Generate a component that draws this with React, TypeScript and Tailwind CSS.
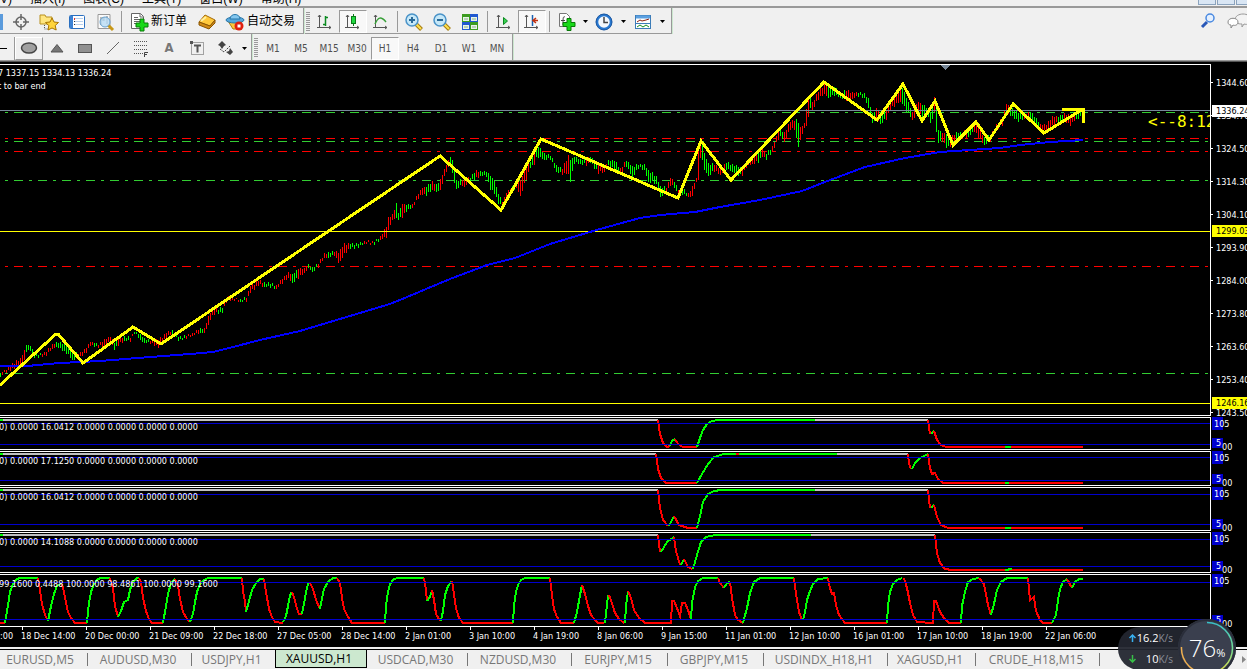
import React from "react";

type Bar = [number, number, number, string];

const keyBars: Bar[] = [
  [0, 373, 377, "g"], [2, 372, 375, "r"], [10, 366, 371, "r"], [20, 358, 367, "r"], [24, 350, 360, "r"], [26, 345, 352, "g"],
  [30, 346, 351, "g"], [34, 353, 358, "g"], [42, 354, 357, "r"], [46, 352, 356, "r"], [52, 344, 349, "r"], [56, 342, 347, "g"],
  [66, 344, 354, "g"], [72, 351, 360, "g"], [78, 354, 359, "r"], [86, 348, 353, "r"], [90, 342, 346, "r"], [94, 343, 347, "g"],
  [98, 345, 348, "r"], [104, 339, 346, "r"], [110, 337, 343, "r"], [114, 343, 350, "g"], [118, 339, 346, "r"], [124, 336, 341, "g"],
  [130, 338, 342, "r"], [134, 332, 334, "g"], [140, 334, 340, "g"], [144, 338, 343, "g"], [150, 341, 344, "r"], [158, 340, 348, "r"],
  [166, 333, 338, "r"], [172, 330, 334, "g"], [178, 337, 341, "g"], [186, 336, 339, "r"], [192, 333, 336, "r"], [200, 328, 333, "g"],
  [204, 328, 333, "r"], [208, 316, 325, "r"], [212, 307, 315, "r"], [218, 310, 314, "g"], [223, 306, 313, "r"], [225, 297, 303, "r"],
  [232, 298, 300, "r"], [240, 299, 302, "g"], [246, 298, 302, "r"], [250, 286, 293, "r"], [258, 281, 286, "r"], [264, 282, 287, "g"],
  [270, 284, 288, "g"], [276, 285, 289, "r"], [282, 279, 284, "r"], [288, 272, 278, "r"], [292, 274, 283, "g"], [298, 269, 279, "r"],
  [304, 268, 273, "r"], [308, 264, 268, "g"], [312, 267, 272, "g"], [318, 264, 268, "r"], [324, 253, 258, "r"], [328, 252, 258, "g"],
  [334, 252, 256, "r"], [339, 252, 265, "r"], [343, 244, 256, "r"], [350, 244, 249, "g"], [358, 244, 248, "g"], [364, 241, 244, "r"],
  [374, 242, 245, "g"], [380, 236, 240, "r"], [386, 227, 238, "r"], [388, 217, 230, "r"], [392, 214, 220, "r"], [396, 203, 218, "g"],
  [398, 213, 220, "g"], [402, 204, 218, "r"], [406, 205, 212, "g"], [412, 204, 208, "r"], [418, 194, 199, "r"], [422, 188, 195, "r"],
  [426, 187, 196, "g"], [432, 181, 190, "r"], [436, 184, 192, "g"], [440, 179, 190, "r"], [446, 165, 172, "r"], [450, 157, 166, "g"],
  [453, 163, 180, "g"], [456, 180, 189, "g"], [462, 180, 186, "r"], [464, 179, 187, "r"], [470, 178, 182, "g"], [475, 171, 180, "r"],
  [480, 171, 176, "g"], [486, 172, 177, "g"], [490, 176, 190, "g"], [494, 181, 194, "g"], [498, 194, 204, "g"], [502, 202, 207, "r"],
  [506, 193, 199, "r"], [512, 186, 192, "g"], [516, 181, 188, "r"], [520, 180, 196, "r"], [526, 166, 180, "r"], [530, 162, 168, "g"],
  [534, 152, 165, "r"], [536, 144, 157, "g"], [544, 153, 160, "g"], [550, 156, 160, "g"], [556, 165, 172, "g"], [562, 169, 175, "r"],
  [568, 155, 174, "r"], [570, 160, 182, "g"], [574, 157, 164, "g"], [580, 159, 164, "g"], [586, 158, 166, "r"], [590, 157, 163, "g"],
  [598, 165, 174, "r"], [604, 165, 172, "r"], [608, 160, 165, "g"], [614, 161, 171, "g"], [620, 168, 174, "r"], [626, 161, 167, "g"],
  [632, 166, 178, "g"], [638, 165, 169, "g"], [644, 164, 170, "g"], [648, 170, 182, "g"], [656, 176, 184, "g"], [660, 186, 197, "g"],
  [666, 188, 194, "r"], [670, 178, 186, "r"], [674, 182, 188, "g"], [678, 190, 197, "r"], [682, 189, 195, "g"], [688, 193, 197, "r"],
  [692, 186, 196, "r"], [696, 178, 182, "r"], [698, 150, 180, "r"], [700, 142, 158, "r"], [702, 144, 160, "g"], [704, 153, 170, "g"],
  [708, 163, 176, "g"], [714, 165, 172, "r"], [720, 168, 175, "r"], [726, 163, 170, "g"], [732, 164, 172, "g"], [738, 167, 176, "g"],
  [742, 169, 176, "r"], [746, 162, 168, "r"], [752, 155, 164, "r"], [758, 152, 163, "g"], [762, 149, 157, "r"], [766, 154, 160, "g"],
  [772, 146, 152, "r"], [778, 132, 140, "r"], [780, 130, 136, "g"], [784, 132, 142, "r"], [790, 122, 130, "r"], [795, 120, 130, "g"],
  [797, 120, 150, "g"], [800, 127, 140, "r"], [804, 123, 128, "r"], [807, 100, 125, "r"], [810, 98, 108, "g"], [812, 102, 110, "r"],
  [818, 92, 100, "r"], [824, 84, 94, "r"], [828, 86, 98, "g"], [834, 87, 96, "g"], [840, 92, 98, "g"], [846, 91, 101, "r"],
  [852, 92, 99, "r"], [858, 93, 97, "g"], [864, 93, 98, "g"], [868, 98, 108, "g"], [872, 113, 123, "g"], [876, 108, 118, "r"],
  [880, 112, 124, "g"], [886, 110, 120, "r"], [890, 100, 110, "r"], [898, 93, 103, "r"], [902, 88, 104, "g"], [906, 98, 112, "g"],
  [912, 112, 120, "r"], [918, 102, 113, "r"], [922, 105, 118, "g"], [928, 108, 117, "g"], [931, 112, 126, "g"], [934, 97, 112, "r"],
  [936, 108, 132, "g"], [938, 130, 143, "g"], [942, 133, 142, "r"], [946, 134, 148, "g"], [950, 138, 147, "r"], [956, 132, 139, "g"],
  [962, 133, 139, "r"], [968, 128, 137, "g"], [974, 122, 132, "r"], [978, 127, 138, "r"], [984, 137, 145, "g"], [990, 136, 142, "r"],
  [996, 124, 130, "r"], [1002, 118, 126, "r"], [1006, 104, 115, "r"], [1010, 107, 116, "g"], [1018, 113, 122, "g"], [1024, 114, 119, "r"],
  [1030, 112, 120, "g"], [1036, 118, 126, "g"], [1040, 124, 131, "r"], [1046, 125, 132, "r"], [1052, 116, 125, "r"], [1058, 117, 124, "g"],
  [1064, 113, 122, "r"], [1070, 116, 126, "r"], [1076, 112, 119, "g"], [1084, 107, 117, "r"],
];

const bars: Bar[] = [];
for (let i = 0; i < keyBars.length - 1; i++) {
  const [x0, h0, l0, c] = keyBars[i];
  const [x1, h1, l1] = keyBars[i + 1];
  for (let x = x0 + (x0 % 2); x < x1; x += 2) {
    const t = (x - x0) / (x1 - x0);
    const up = x === x0 ? 0 : ((x * 7) % 4) - 1;
    const down = x === x0 ? 0 : ((x * 11) % 4) - 2;
    bars.push([x, Math.round(h0 + (h1 - h0) * t) + up, Math.round(l0 + (l1 - l0) * t) + down, c]);
  }
}

type Line = [string, string];
const R = "#ff0000";
const G = "#00ff00";
const S = "#c0c0c0";

interface Pane {
  top: number;
  box: string;
  levels: [number, number];
  text: string;
  lines: Line[];
}

const panes: Pane[] = [
  {
    top: 417, box: "h-[33px]", levels: [423, 444], text: "0) 0.0000 16.0412 0.0000 0.0000 0.0000 0.0000",
    lines: [
      [S, "3,420 658,420"], [G, "0,420 3,420"], [R, "658,420 660,434 663,443 667,447 670,446"], [G, "670,446 672,441 675,439"],
      [R, "675,439 678,444 683,447 697,447"], [G, "697,447 700,438 703,430 707,424 712,421 718,420 815,420"], [S, "815,420 928,420"],
      [R, "928,420 930,434"], [G, "931,434 934,431"], [R, "934,431 937,440 941,445 946,447 1083,447"], [G, "1005,447 1011,447"],
    ],
  },
  {
    top: 451, box: "h-[35px]", levels: [457, 480], text: "0) 0.0000 17.1250 0.0000 0.0000 0.0000 0.0000",
    lines: [
      [S, "3,454 656,454"], [G, "0,454 3,454"], [R, "656,454 658,469 661,478 666,483 697,483"],
      [G, "697,483 702,474 708,464 714,457 724,454 837,454"], [R, "736,454 739,454"], [S, "837,454 908,454"],
      [R, "908,454 909,464 911,469"], [G, "912,469 915,463 920,458 928,454"], [R, "928,454 930,468 932,474 935,473 938,479 943,483 1083,483"],
      [G, "1005,483 1009,483"],
    ],
  },
  {
    top: 487, box: "h-[44px]", levels: [494, 524], text: "0) 0.0000 16.0412 0.0000 0.0000 0.0000 0.0000",
    lines: [
      [S, "3,490 658,490"], [G, "0,490 3,490"], [R, "658,490 660,508 663,520 668,526"], [G, "669,526 674,516"],
      [R, "674,516 679,525 688,528 697,528"], [G, "697,528 700,516 703,502 708,494 714,491 721,490 815,490"], [S, "815,490 928,490"],
      [R, "928,490 930,508"], [G, "931,508 934,505"], [R, "934,505 937,517 941,525 948,528 1083,528"], [G, "1005,528 1011,528"],
    ],
  },
  {
    top: 532, box: "h-[41px]", levels: [539, 566], text: "0) 0.0000 14.1088 0.0000 0.0000 0.0000 0.0000",
    lines: [
      [S, "3,535 658,535"], [G, "0,535 3,535"], [R, "658,535 660,552"], [G, "661,552 667,542 674,537"], [R, "674,537 676,551 680,565"],
      [G, "681,565 684,559"], [R, "684,559 688,567 692,569"], [G, "693,569 697,555 701,542 706,537 715,535 811,535"], [S, "811,535 935,535"],
      [R, "935,535 937,553 940,563 945,569 952,570 1083,570"], [G, "1005,570 1012,569"],
    ],
  },
  {
    top: 574, box: "h-[53px]", levels: [582, 619], text: "99.1600 0.4488 100.0000 98.4861 100.0000 99.1600",
    lines: [
      [R, "0,623 5,623"], [G, "5,623 8,605 10,592 13,584 17,579 20,578 38,578"], [R, "38,578 40,590 42,604 45,615 48,621"],
      [G, "48,621 51,606 54,594 57,586 61,584"], [R, "62,584 64,592 66,603 68,612 71,618 75,623 87,623"],
      [G, "87,623 88,612 89,603 91,592 94,584 98,579 101,578 110,578"], [R, "110,578 113,588 115,606 118,617"],
      [G, "118,617 121,611 124,602 128,600 130,590 133,582 137,578 139,578"], [R, "139,578 141,582 143,598 146,611 149,619 152,623 163,623"],
      [G, "163,623 166,606 168,594 171,583 175,579"], [R, "175,579 178,585 180,599 183,612 187,619 190,622"],
      [G, "190,622 193,614 195,602 197,592 200,584 204,580 208,578 242,578"], [R, "242,578 243,592 245,601 246,612"],
      [G, "246,612 249,601 252,590 256,583 260,579 264,579"], [R, "264,579 266,592 269,609 272,617 275,622 283,623"],
      [G, "283,622 286,616 288,606 290,595 292,592"], [R, "292,592 294,597 297,609 299,614 302,614"],
      [G, "302,614 304,604 306,592 308,584 310,583"], [R, "310,583 313,589 316,600 320,609"],
      [G, "320,609 322,598 324,589 328,582 333,578 337,578"], [R, "337,578 340,583 342,598 344,609 347,615 352,623 385,623"],
      [G, "385,623 386,605 388,592 390,584 394,579 398,578 424,578"], [R, "424,578 426,590 427,601"], [G, "427,601 430,597 432,590"],
      [R, "432,590 434,600 436,614 440,621"], [G, "441,621 443,611 445,595 448,586 452,581"],
      [R, "452,581 454,594 456,608 459,618 463,623 513,623"], [G, "513,623 514,605 516,592 518,585 521,580 525,578 550,578"],
      [R, "550,578 552,595 554,609 557,617 561,623 574,623"], [G, "574,623 577,612 580,595 582,585"],
      [R, "582,585 585,594 588,606 591,615 595,620 598,623 604,623"], [G, "605,623 607,605 608,595"],
      [R, "609,595 612,603 615,613 619,619 624,623"], [G, "625,623 626,606 628,591"],
      [R, "628,591 631,598 634,610 639,618 645,623 671,623 672,601 674,601 677,608 680,616 682,603 685,603 688,610 691,619"],
      [G, "691,619 692,603 695,587 698,581 703,578 718,578"], [R, "718,578 720,583 724,588"], [G, "724,588 727,583 730,582"],
      [R, "730,582 732,598 735,615 738,620 743,623"], [G, "743,623 747,608 750,593 754,582 760,578 794,578"],
      [R, "794,578 796,594 799,612 802,620"], [G, "803,620 805,612 807,600 810,591 813,584 818,579 828,578"],
      [R, "828,578 830,588 832,594 834,593 836,605 839,615 845,623 887,623"], [G, "887,623 888,605 890,592 893,584 897,580 902,578"],
      [R, "904,578 907,588 910,603 913,615 917,622 933,623 934,601 936,601 940,612 944,618 949,623 961,623"],
      [G, "961,623 962,606 965,592 968,582 973,579 979,578"], [R, "979,578 984,584 988,605 991,615"],
      [G, "991,615 994,604 997,590 1001,582 1007,578 1028,578"], [R, "1028,578 1030,600 1034,597 1036,611 1040,620 1043,623 1052,623"],
      [G, "1052,623 1056,615 1058,600 1060,589 1063,582 1067,579"], [R, "1067,579 1072,588"], [G, "1072,588 1075,582 1079,579 1083,579"],
    ],
  },
];

const dashed: [number, string][] = [
  [112, "#32cd32"], [138, R], [141, "#32cd32"], [151, R], [180, "#32cd32"], [266, R], [373, "#32cd32"],
];

const prices = ["1344.60", "1334.70", "1324.50", "1314.30", "1304.10", "1293.90", "1284.00", "1273.80", "1263.60", "1253.40", "1243.50"];

const times = [
  "18 Dec 14:00", "20 Dec 00:00", "21 Dec 09:00", "22 Dec 18:00", "27 Dec 05:00", "28 Dec 14:00", "2 Jan 01:00", "3 Jan 10:00",
  "4 Jan 19:00", "8 Jan 06:00", "9 Jan 15:00", "11 Jan 01:00", "12 Jan 10:00", "16 Jan 01:00", "17 Jan 10:00", "18 Jan 19:00", "22 Jan 06:00",
];

const tabs: [string, string][] = [
  ["EURUSD,M5", "w-[88px] pr-2"], ["AUDUSD,M30", "w-[104px] pr-1"], ["USDJPY,H1", "w-[83px] pr-1"], ["XAUUSD,H1", "w-[92px] pr-1"],
  ["USDCAD,M30", "w-[101px] pr-1"], ["NZDUSD,M30", "w-[104px] pr-1"], ["EURJPY,M15", "w-[96px] pr-1"], ["GBPJPY,M15", "w-[96px] pr-1"],
  ["USDINDX_H18,H1", "w-[124px] pr-1"], ["XAGUSD,H1", "w-[88px] pr-1"], ["CRUDE_H18,M15", "w-[124px] pr-1"],
];

const Icon = ({ children }: { children: React.ReactNode }) => (
  <svg width="20" height="20" viewBox="0 0 20 20" fill="none" aria-hidden="true" className="shrink-0">{children}</svg>
);

const Axes = () => <path d="M4.5 3v13M2 15.5h14M3 5l1.5-2L6 5M14 14l2 1.5-2 1.5" stroke="#555" />;
const Plus = () => <path d="M13 9h4v4h4v4h-4v4h-4v-4H9v-4h4z" transform="translate(0 -1.5)" fill="#18d818" stroke="#087a08" />;
const Lens = ({ plus }: { plus?: boolean }) => (
  <Icon>
    <path d="M12 12l5.500 5.500" stroke="#a67c10" strokeWidth="4" />
    <path d="M12 12l5 5" stroke="#ffe14d" strokeWidth="2" />
    <circle cx="8" cy="8" r="6" fill="#c6e8f8" stroke="#4a93c8" strokeWidth="1.500" />
    <path d={plus ? "M5 8h6M8 5v6" : "M5 8h6"} stroke="#2a6a98" strokeWidth="2" />
  </Icon>
);

type Look = "flat" | "pressed" | "raised";
const looks: Record<Look, string> = {
  flat: "border-transparent",
  pressed: "border-r-white border-b-white border-l-[#999] border-t-[#999] bg-[#f8f8f8]",
  raised: "border-l-white border-t-white border-r-[#999] border-b-[#999]",
};

const ToolButton = ({ label, look = "flat", children }: { label: string; look?: Look; children: React.ReactNode }) => (
  <button
    type="button"
    aria-label={label}
    aria-pressed={look !== "flat"}
    className={"flex h-[23px] w-7 shrink-0 items-center justify-center border " + looks[look]}
  >
    {children}
  </button>
);

const Sep = () => <div className="mx-[2px] h-[21px] w-px shrink-0 bg-[#999]" />;
const Grip = () => (
  <div className="mx-px h-[20px] w-[4px] shrink-0 bg-[repeating-linear-gradient(to_bottom,#999_0_1px,#f0f0f0_1px_2px)]" />
);
const GroupEnd = () => <div className="-mt-[2px] h-[26px] w-[2px] shrink-0 border-l border-[#999] bg-[#cce8cf]" />;
const Caret = ({ label }: { label: string }) => (
  <button type="button" aria-label={label} className="flex h-[23px] w-[10px] items-center justify-center">
    <svg width="5" height="3" aria-hidden="true"><path d="M0 0h5L2.500 3z" fill="#000" /></svg>
  </button>
);

function MenuStrip() {
  return (
    <div className="flex h-2 items-end justify-between overflow-hidden border-b-2 border-b-[#999] bg-[#f0f0f0]">
      <nav className="-ml-7 flex gap-[18px] text-[12px] leading-[13px] text-black">
        {["显示(V)", "插入(I)", "图表(C)", "工具(T)", "窗口(W)", "帮助(H)"].map((m) => (
          <a key={m} href="#menu" className="whitespace-nowrap">{m}</a>
        ))}
      </nav>
      <div className="flex h-full gap-px pb-px">
        <button type="button" aria-label="最小化" className="w-[18px] border border-t-0 border-[#8ba3bd] bg-[#d9e6f4]" />
        <button type="button" aria-label="还原" className="w-[18px] border border-t-0 border-[#8ba3bd] bg-[#d9e6f4]" />
        <button type="button" aria-label="关闭" className="w-[11px] border border-t-0 border-r-0 border-[#8ba3bd] bg-[#d9e6f4]" />
      </div>
    </div>
  );
}

function MainToolbar() {
  return (
    <div className="flex h-[26px] items-center bg-[#f0f0f0]">
      <div className="flex h-full items-center border-b border-[#999] pt-[2px]">
        <div className="mr-1 h-4 w-[3px] bg-[#5b9bdc]" />
        <ToolButton label="数据窗口">
          <Icon>
            <circle cx="10" cy="10" r="5" stroke="#666" strokeWidth="1.500" />
            <path d="M10 2v6M10 12v6M2 10h6M12 10h6" stroke="#666" strokeWidth="1.500" />
          </Icon>
        </ToolButton>
        <ToolButton label="导航">
          <Icon>
            <path d="M1 3h5l1 2h6v7H1z" fill="#ffe680" stroke="#b89020" />
            <path d="M5.500 13v4h4" stroke="#555" strokeDasharray="1 1" />
            <path d="M13 6l2 4 4.500.500-3.300 3 1 4.500L13 16l-4 2 .800-4.500-3.300-3L11 10z" fill="#ffd43b" stroke="#a87400" />
          </Icon>
        </ToolButton>
        <ToolButton label="终端">
          <Icon>
            <rect x="2.500" y="3.500" width="15" height="13" rx="1" fill="#fff" stroke="#2a6fc0" />
            <path d="M4.500 4v12" stroke="#3c82d4" strokeWidth="3" />
            <path d="M8 6.500h8M8 9.500h8M8 12.500h8" stroke="#b8cfec" />
            <path d="M7.500 6v2" stroke="#e03030" />
            <path d="M7.500 9v6" stroke="#333" strokeDasharray="1 2" />
          </Icon>
        </ToolButton>
        <ToolButton label="策略测试">
          <Icon>
            <path d="M3 2.500h12v14H3z" fill="#fafafa" stroke="#999" />
            <path d="M5 6h3v3M6 13V7M12 4v8M9 5v4" stroke="#777" />
            <path d="M13 13l5 5" stroke="#c89818" strokeWidth="3" />
            <circle cx="10" cy="10" r="5" fill="#b8dcf5" fillOpacity=".8" stroke="#6aa3d0" />
          </Icon>
        </ToolButton>
        <Sep />
        <button type="button" className="ml-[5px] flex h-[23px] items-center text-[12px] whitespace-nowrap text-black">
          <Icon>
            <path d="M2.500 1.500h9l3 3v12h-12z" fill="#fff" stroke="#666" />
            <path d="M11 2v3h3M5 5.500h4M5 7.500h6M5 9.500h6M5 11.500h4" stroke="#666" />
            <path d="M10 7h4v4h4v4h-4v4h-4v-4H6v-4h4z" transform="translate(1 0)" fill="#18d818" stroke="#087a08" />
          </Icon>
          <span className="ml-[2px] pb-[2px]">新订单</span>
        </button>
        <span className="w-[6px]" />
        <ToolButton label="MetaEditor">
          <Icon>
            <path d="M2 10l6-7 10 5-5 6z" fill="#ffc93c" stroke="#a56a08" />
            <path d="M2 10v3l10 4 6-6V8l-5 6z" fill="#d18a14" stroke="#8a5604" />
            <path d="M4 9l5-4" stroke="#fff0a0" strokeWidth="2" />
          </Icon>
        </ToolButton>
        <button type="button" className="ml-[4px] flex h-[23px] items-center text-[12px] whitespace-nowrap text-black">
          <Icon>
            <path d="M3 9h14l-3 8H8z" fill="#ffc83a" stroke="#b07e10" />
            <ellipse cx="10" cy="8" rx="9" ry="3" fill="#56a8dc" stroke="#2876a8" />
            <path d="M5 7c0-6 10-6 10 0z" fill="#82c6ee" stroke="#2876a8" />
            <circle cx="14" cy="14" r="4.500" fill="#e02010" />
            <rect x="12.500" y="12.500" width="3" height="3" fill="#fff" />
          </Icon>
          <span className="ml-[2px] pb-[2px]">自动交易</span>
        </button>
        <span className="w-[8px]" />
        <GroupEnd />
        <Grip />
        <ToolButton label="柱状图">
          <Icon><Axes /><path d="M10.500 4v10M10 5.500h3M8 12.500h3" stroke="#0a8a20" strokeWidth="1.500" /></Icon>
        </ToolButton>
        <ToolButton label="阴阳烛" look="pressed">
          <Icon><Axes /><path d="M10.500 2v12" stroke="#0a7a18" /><rect x="8.500" y="4.500" width="4" height="7" fill="#20d840" stroke="#0a7a18" /></Icon>
        </ToolButton>
        <ToolButton label="折线图">
          <Icon><Axes /><path d="M4 12c3-7 6-8 11-2" stroke="#38a038" strokeWidth="1.500" /></Icon>
        </ToolButton>
        <Sep />
        <ToolButton label="放大"><Lens plus /></ToolButton>
        <ToolButton label="缩小"><Lens /></ToolButton>
        <ToolButton label="平铺窗口">
          <Icon>
            <path d="M2 2h8v8H2zM10 10h8v8h-8z" fill="#3c9c20" />
            <path d="M10 2h8v8h-8zM2 10h8v8H2z" fill="#2058d0" />
            <path d="M3 5h6v4H3zM11 5h6v4h-6zM3 13h6v4H3zM11 13h6v4h-6z" fill="#e8f4e8" />
            <path d="M4 7h4M12 7h4M4 15h4M12 15h4" stroke="#8ab088" />
          </Icon>
        </ToolButton>
        <span className="w-px" />
        <Sep />
        <ToolButton label="自动滚动">
          <Icon><Axes /><path d="M9.500 5.500v7l4-3.500z" fill="#38d050" stroke="#0a8a20" /></Icon>
        </ToolButton>
        <ToolButton label="图表平移" look="pressed">
          <Icon><Axes /><path d="M10.500 3v11" stroke="#1860b0" strokeWidth="1.500" /><path d="M16 8.500h-5M14 6l-3 2.500 3 2.500" stroke="#c03010" strokeWidth="1.500" /></Icon>
        </ToolButton>
        <span className="w-px" />
        <Sep />
        <ToolButton label="指标">
          <Icon>
            <path d="M3.500 1.500h7l3 3v10h-10z" fill="#fff" stroke="#777" />
            <path d="M9 5c-2-1-2 1-2 8M5 8.500h4" stroke="#444" />
            <g transform="translate(-2 -1)"><Plus /></g>
          </Icon>
        </ToolButton>
        <Caret label="指标列表" />
        <ToolButton label="时间周期">
          <Icon>
            <circle cx="10" cy="10" r="7" fill="#f4f8fc" stroke="#2878d0" strokeWidth="2.500" />
            <circle cx="10" cy="10" r="8" stroke="#174e94" strokeWidth=".8" />
            <path d="M10 5v5.500h4" stroke="#444" strokeWidth="1.500" />
          </Icon>
        </ToolButton>
        <Caret label="周期列表" />
        <span className="w-px" />
        <ToolButton label="模板">
          <Icon>
            <rect x="2.500" y="3.500" width="15" height="13" fill="#fff" stroke="#3c7cb8" />
            <path d="M3 5h14" stroke="#5ba0e0" strokeWidth="3" />
            <path d="M4 10l3-2 2 1 4-1 3-1" stroke="#8a2010" />
            <path d="M3 11.500h14" stroke="#3c7cb8" />
            <path d="M4 15l3-2 3 2 3-2 3 2" stroke="#189020" />
          </Icon>
        </ToolButton>
        <Caret label="模板列表" />
        <span className="w-[4px]" />
        <GroupEnd />
      </div>
      <div className="ml-auto flex items-center gap-2">
        <button type="button" aria-label="搜索">
          <Icon>
            <path d="M8 11l-5 5" stroke="#2858b8" strokeWidth="3" />
            <circle cx="11" cy="7" r="4" fill="#e4f0ff" stroke="#4888e0" strokeWidth="1.500" />
          </Icon>
        </button>
        <button type="button" aria-label="聊天" className="w-5 overflow-hidden">
          <Icon>
            <path d="M8 9c0-8 16-8 16 0 0 4-4 5-7 4l-2 3v-3c-4 0-7-1-7-4z" fill="#f4f4f4" stroke="#999" />
            <path d="M1 11c0-5 10-5 10 0 0 3-3 4-5 3l-2 3v-3c-2 0-3-1-3-3z" fill="#fff" stroke="#888" />
          </Icon>
        </button>
      </div>
    </div>
  );
}

function DrawToolbar() {
  return (
    <div className="flex h-[26px] items-center bg-[#f0f0f0] pt-[2px] font-['DejaVu_Sans_Condensed','DejaVu_Sans',sans-serif] text-[10px] text-[#505050]">
      <button type="button" aria-label="水平线" className="flex h-[23px] w-[15px] items-center border-r border-[#999]">
        <span className="h-px w-[7px] bg-black" />
      </button>
      <ToolButton label="椭圆" look="raised">
        <Icon><ellipse cx="10" cy="10" rx="7.500" ry="5" fill="#a0a0a0" stroke="#444" strokeWidth="1.500" /></Icon>
      </ToolButton>
      <ToolButton label="三角形"><Icon><path d="M4 14l6-7.500 6 7.500z" fill="#777" stroke="#555" /></Icon></ToolButton>
      <ToolButton label="矩形"><Icon><rect x="3.500" y="6.500" width="13" height="8" fill="#909090" stroke="#555" /></Icon></ToolButton>
      <ToolButton label="趋势线"><Icon><path d="M4 16L16 4" stroke="#666" /></Icon></ToolButton>
      <ToolButton label="斐波那契">
        <Icon>
          <path d="M3 3.500h14M3 7.500h14M3 11.500h14M3 15.500h9" stroke="#555" strokeDasharray="1 1" />
          <path d="M17 14.500h-3.500V19M13.500 16.500H16" stroke="#444" />
        </Icon>
      </ToolButton>
      <ToolButton label="文字"><span className="text-[13px] font-bold text-[#777]">A</span></ToolButton>
      <ToolButton label="文字标签">
        <Icon>
          <rect x="4.500" y="4.500" width="12" height="12" stroke="#555" strokeDasharray="1 1" />
          <path d="M7 7.500h7M10.500 7v7.500" stroke="#555" strokeWidth="2" />
          <path d="M3 3h3v3H3z" fill="#555" />
        </Icon>
      </ToolButton>
      <ToolButton label="箭头">
        <Icon>
          <path d="M7 3l4 4-2 1-2 3-2-3-2-1zM15 10l3 4-3 3-4-3 3-1z" fill="#444" />
          <path d="M5 11l4 3 6-6" stroke="#444" strokeDasharray="2 1" />
        </Icon>
      </ToolButton>
      <Caret label="箭头列表" />
      <span className="w-[2px]" />
      <GroupEnd />
      <Grip />
      {["M1", "M5", "M15", "M30", "H1", "H4", "D1", "W1", "MN"].map((p) => (
        <ToolButton key={p} label={p} look={p === "H1" ? "pressed" : "flat"}>{p}</ToolButton>
      ))}
      <span className="w-px" />
      <GroupEnd />
    </div>
  );
}

function PriceTag({ children, place }: { children: string; place: string }) {
  return <div className={"absolute right-0 left-px h-[12px] pl-[4px] leading-[13px] text-black " + place}>{children}</div>;
}

function PriceChart() {
  return (
    <section className="flex h-[352px]">
      <div className="relative min-w-0 flex-1 overflow-hidden border-y border-r border-white">
        <svg className="block h-full w-full" shapeRendering="crispEdges" role="img" aria-label="XAUUSD H1">
          <g transform="translate(0 -65)" fill="none">
            {dashed.map(([y, c]) => (
              <line key={y} x1="-10" x2="100%" y1={y + 0.5} y2={y + 0.5} stroke={c} strokeDasharray="9 6 3 6" />
            ))}
            {bars.map(([x, h, l, c]) => (
              <line key={x} x1={x + 0.5} x2={x + 0.5} y1={h} y2={l} stroke={c === "r" ? R : G} />
            ))}
            <line x1="0" x2="100%" y1="110.5" y2="110.5" stroke="#778899" />
            <line x1="0" x2="100%" y1="231.5" y2="231.5" stroke="#ffff00" />
            <line x1="0" x2="100%" y1="403.5" y2="403.5" stroke="#ffff00" />
            <polyline
              points="0,366 27,366 60,363 100,361 150,357 190,354 213,352 233,347 260,340 300,331 350,316 390,304 407,297 450,279 487,265 515,258 550,244 600,229 640,218 660,215 695,212 720,207 760,200 802,191 830,180 865,167 905,158 940,152 1000,148 1020,145 1050,142 1083,140"
              stroke="#0000ff" strokeWidth="2"
            />
            <polyline
              points="0,385 56,334 58,334 83,363 133,327 161,344 440,156 501,210 541,139 678,198 701,141 731,180 824,82 877,120 903,84 922,121 935,101 953,145 976,122 989,140 1013,104 1044,133 1083,109"
              stroke="#ffff00" strokeWidth="3"
            />
            <path d="M1062 109.500h21.500V123" stroke="#ffff00" strokeWidth="3" />
            <path d="M940 65h11l-5.500 5z" fill="#778899" />
          </g>
        </svg>
        <div className="absolute top-[2px] -left-[2px] leading-[13px] whitespace-nowrap">
          <p>7 1337.15 1334.13 1336.24</p>
          <p>t to bar end</p>
        </div>
        <p className="absolute top-[47px] right-0 w-[62px] overflow-hidden font-['DejaVu_Sans_Mono',monospace] text-[16px] leading-5 whitespace-nowrap text-[#ff0]">
          &lt;--8:12
        </p>
      </div>
      <div className="relative w-9 shrink-0 pt-[13px] whitespace-nowrap">
        {prices.map((p) => (
          <div key={p} className="flex h-[33px] leading-[12px]">
            <span className="mt-[5px] h-px w-[2px] shrink-0 bg-white" />
            <span className="ml-[3px]">{p}</span>
          </div>
        ))}
        <PriceTag place="top-[41px] bg-white">1336.24</PriceTag>
        <PriceTag place="top-[161px] bg-[#ff0]">1299.03</PriceTag>
        <PriceTag place="top-[333px] bg-[#ff0]">1246.16</PriceTag>
      </div>
    </section>
  );
}

function IndicatorPane({ pane }: { pane: Pane }) {
  return (
    <section className={"mt-px flex " + pane.box}>
      <div className="relative min-w-0 flex-1 overflow-hidden border-y border-r border-white">
        <svg className="block h-full w-full" shapeRendering="crispEdges" aria-hidden="true">
          <g transform={`translate(0 ${-(pane.top + 1)})`} fill="none">
            {pane.lines.map(([c, pts], i) => (
              <polyline key={i} points={pts} stroke={c} strokeWidth="2" />
            ))}
            {pane.levels.map((y) => (
              <line key={y} x1="0" x2="100%" y1={y + 0.5} y2={y + 0.5} stroke="#0000cd" />
            ))}
          </g>
        </svg>
        <p className="absolute top-[3px] -left-px leading-[13px] whitespace-nowrap">{pane.text}</p>
      </div>
      <div className="flex w-9 shrink-0 flex-col justify-between overflow-hidden pl-px">
        <div className="h-[13px] w-[11px] bg-[#0000cd] pl-[2px] leading-[15px]">105</div>
        <div className="flex h-[12px] overflow-hidden">
          <span className="h-[10px] w-[11px] shrink-0 bg-[#0000cd] pl-[4px] leading-[10px]">5</span>
          <span className="-ml-px pt-[3px] leading-[12px]">00</span>
        </div>
      </div>
    </section>
  );
}

function TimeAxis() {
  return (
    <div className="flex h-[20px] overflow-hidden whitespace-nowrap">
      <div className="flex w-[21px] shrink-0 pt-[3px] leading-[12px]">:00</div>
      {times.map((t) => (
        <div key={t} className="w-[64px] shrink-0">
          <div className="ml-px h-[3px] w-px bg-white" />
          <div className="leading-[12px]">{t}</div>
        </div>
      ))}
    </div>
  );
}

function ChartTabs() {
  return (
    <div className="flex h-5 overflow-hidden border-t border-black bg-[#f0f0f0] font-['Open_Sans',sans-serif] text-[12px] text-[#777]">
      {tabs.map(([name, width], i) => (
        <button
          key={name}
          type="button"
          className={
            "relative shrink-0 text-center whitespace-nowrap " + width +
            (i === 3 ? " h-[18px] border border-t-0 border-black bg-[#cce8cf] leading-[17px] text-black" : " h-[19px] leading-[18px]")
          }
        >
          {name}
          {i !== 3 && i !== 2 && <span className="absolute top-[3px] right-0 h-[13px] w-px bg-[#777]" />}
        </button>
      ))}
      <span className="ml-auto flex items-center pr-px">
        <svg width="4" height="7" aria-hidden="true"><path d="M0 0l4 3.500L0 7z" fill="#888" /></svg>
      </span>
    </div>
  );
}

function NetMonitor() {
  return (
    <aside className="absolute right-[11px] -bottom-[8px] h-[56px] w-[118px] font-['Open_Sans',sans-serif]">
      <div className="absolute top-[6px] left-0 flex h-[43px] w-[90px] flex-col justify-between rounded-l-[22px] bg-[#23262f]/95 py-[2px] pl-[11px] text-[11px] leading-[17px] text-white">
        <p className="flex w-[44px] items-center justify-between">
          <svg width="7" height="8" aria-hidden="true" className="shrink-0"><path d="M3.500 8V1M.5 4l3-3 3 3" stroke="#38b0f0" strokeWidth="1.500" fill="none" /></svg>
          <span className="whitespace-nowrap">16.2<span className="text-[10px] text-[#8a8e98]">K/s</span></span>
        </p>
        <p className="flex w-[44px] items-center justify-between">
          <svg width="7" height="8" aria-hidden="true" className="shrink-0"><path d="M3.500 0v7M.5 4l3 3 3-3" stroke="#38c048" strokeWidth="1.500" fill="none" /></svg>
          <span className="whitespace-nowrap">10<span className="text-[10px] text-[#8a8e98]">K/s</span></span>
        </p>
      </div>
      <div className="absolute -top-[2px] right-0 flex h-[58px] w-[58px] items-center justify-center rounded-full bg-[#3a3f4e] text-white">
        <svg width="58" height="58" className="absolute inset-0" fill="none" aria-hidden="true">
          <defs>
            <linearGradient id="load" x1="0" y1="0" x2="0" y2="1">
              <stop offset="0" stopColor="#38c0c8" />
              <stop offset=".55" stopColor="#78e090" />
              <stop offset="1" stopColor="#f0e040" />
            </linearGradient>
          </defs>
          <circle cx="29" cy="29" r="28" stroke="#2a2e3a" strokeWidth="2" />
          <path d="M29 3.500A25.500 25.500 0 0 1 29 54.500" stroke="url(#load)" strokeWidth="1.500" />
          <path d="M29 54.500A25.500 25.500 0 0 1 3.500 28" stroke="#f0b050" strokeWidth="1.500" />
        </svg>
        <span className="relative flex items-baseline text-[24px] leading-none font-light">
          76<span className="text-[11px] font-normal">%</span>
        </span>
      </div>
    </aside>
  );
}

export default function App() {
  return (
    <div className="relative overflow-hidden bg-black font-['Liberation_Sans','Noto_Sans_CJK_SC',sans-serif]">
      <MenuStrip />
      <MainToolbar />
      <DrawToolbar />
      <div className="mb-[2px] h-[2px] border-t border-[#999] bg-[#555]" />
      <main className="font-['DejaVu_Sans_Condensed','DejaVu_Sans',sans-serif] text-[9px] text-white">
        <PriceChart />
        {panes.map((p) => <IndicatorPane key={p.top} pane={p} />)}
        <TimeAxis />
      </main>
      <div className="h-[2px] bg-[#f0f0f0]" />
      <ChartTabs />
      <NetMonitor />
    </div>
  );
}
